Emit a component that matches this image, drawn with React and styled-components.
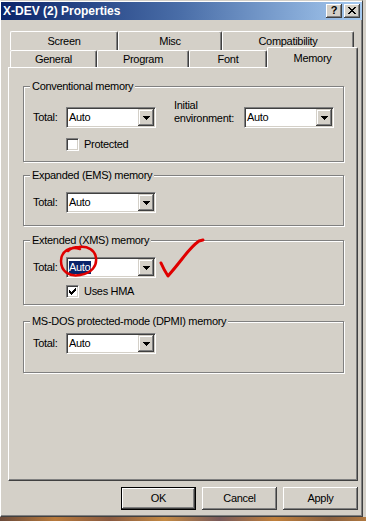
import React from 'react';
import styled, { createGlobalStyle } from 'styled-components';

const FACE = '#d4d0c8';

const Global = createGlobalStyle`
  html, body { margin: 0; padding: 0; }
  body {
    background: ${FACE};
    font-family: "Liberation Sans", Arial, sans-serif;
    font-size: 11px;
    letter-spacing: -0.3px;
    color: #000;
  }
  #root { width: 366px; height: 521px; overflow: hidden; }
`;

const Screen = styled.div`
  position: relative;
  width: 366px;
  height: 521px;
  display: flex;
  flex-direction: column;
  background: ${FACE};
`;

const Window = styled.div`
  box-sizing: border-box;
  width: 363px;
  height: 517px;
  background: ${FACE};
  border-left: 1px solid #fff;
  border-top: 1px solid ${FACE};
  border-right: 1px solid #404040;
  border-bottom: 1px solid #404040;
  box-shadow: inset 0 1px 0 #fff, inset -1px -1px 0 #808080;
  display: flex;
  flex-direction: column;
`;

const Desktop = styled.div`
  height: 4px;
  background: linear-gradient(90deg, #6b4a3a, #b87a3c 15%, #8a5a40 30%, #c48a44 45%, #7a5a5a 60%, #c0803c 75%, #8a6040 90%, #b07840);
`;

const TitleBar = styled.div`
  height: 18px;
  margin-top: 1px;
  padding: 0 2px;
  display: flex;
  align-items: center;
  justify-content: space-between;
  background: linear-gradient(90deg, #0a246a 0%, #4a6ea8 50%, #a6caf0 100%);
`;

const Title = styled.span`
  color: #fff;
  font-weight: bold;
  font-size: 12px;
  letter-spacing: 0;
  white-space: nowrap;
`;

const CaptionButtons = styled.div`
  display: flex;
  gap: 2px;
`;

const CaptionButton = styled.div`
  box-sizing: border-box;
  width: 16px;
  height: 14px;
  background: ${FACE};
  box-shadow: inset -1px -1px 0 #404040, inset 1px 1px 0 #fff, inset -2px -2px 0 #808080;
  display: flex;
  align-items: center;
  justify-content: center;
  font-weight: bold;
  font-size: 11px;
  line-height: 11px;
  letter-spacing: 0;
  padding-bottom: 1px;
`;

const Body = styled.div`
  padding: 11px 0 0 7px;
  display: flex;
  flex-direction: column;
`;

const TabRow = styled.div`
  display: flex;
  align-items: flex-end;
  height: ${(p) => p.$h}px;
  padding-left: 2px;
`;

const Tab = styled.div`
  box-sizing: border-box;
  width: ${(p) => p.$w}px;
  height: ${(p) => (p.$active ? 21 : p.$h)}px;
  margin-bottom: ${(p) => (p.$active ? -1 : 0)}px;
  position: relative;
  z-index: ${(p) => (p.$active ? 2 : 1)};
  background: ${FACE};
  border-left: 1px solid #fff;
  border-top: 1px solid #fff;
  border-right: 1px solid #404040;
  border-radius: 2px 2px 0 0;
  box-shadow: inset -1px 0 0 #808080;
  display: flex;
  align-items: center;
  justify-content: center;
  white-space: nowrap;
`;

const Panel = styled.div`
  box-sizing: border-box;
  width: 350px;
  height: 414px;
  background: ${FACE};
  border-left: 1px solid #fff;
  border-top: 1px solid #fff;
  border-right: 1px solid #404040;
  border-bottom: 1px solid #404040;
  box-shadow: inset -1px -1px 0 #808080;
  padding: 18px 0 0 14px;
  display: flex;
  flex-direction: column;
`;

const Group = styled.div`
  box-sizing: border-box;
  width: 321px;
  height: ${(p) => p.$h}px;
  margin-top: ${(p) => p.$mt}px;
  border: 1px solid #808080;
  box-shadow: inset 1px 1px 0 #fff, 1px 1px 0 #fff;
  padding-left: 9px;
  display: flex;
  flex-direction: column;
`;

const Legend = styled.div`
  align-self: flex-start;
  margin: -7px 0 0 -3px;
  padding: 0 2px;
  background: ${FACE};
  line-height: 13px;
  white-space: nowrap;
`;

const Row = styled.div`
  display: flex;
  align-items: flex-end;
  margin-top: ${(p) => p.$mt}px;
`;

const Label = styled.div`
  width: ${(p) => p.$w}px;
  line-height: 13px;
  margin-bottom: ${(p) => p.$mb}px;
  margin-left: ${(p) => p.$ml || 0}px;
  white-space: nowrap;
`;

const Select = styled.div`
  box-sizing: border-box;
  width: 90px;
  height: 21px;
  background: #fff;
  border-top: 1px solid #808080;
  border-left: 1px solid #808080;
  border-right: 1px solid #fff;
  border-bottom: 1px solid #fff;
  box-shadow: inset 1px 1px 0 #404040, inset -1px -1px 0 ${FACE};
  padding: 1px;
  display: flex;
  align-items: center;
`;

const SelectValue = styled.div`
  flex: 1;
  display: flex;
  padding-left: 1px;
`;

const ValueText = styled.span`
  line-height: 13px;
  padding: 0 1px 0 0;
  background: ${(p) => (p.$selected ? '#0a246a' : 'transparent')};
  color: ${(p) => (p.$selected ? '#fff' : '#000')};
`;

const DropButton = styled.div`
  box-sizing: border-box;
  width: 16px;
  height: 17px;
  background: ${FACE};
  box-shadow: inset -1px -1px 0 #404040, inset 1px 1px 0 ${FACE}, inset -2px -2px 0 #808080, inset 2px 2px 0 #fff;
  display: flex;
  align-items: center;
  justify-content: center;
`;

const CheckRow = styled.div`
  display: flex;
  align-items: center;
  gap: 5px;
  margin-top: ${(p) => p.$mt}px;
  margin-left: 33px;
  line-height: 13px;
`;

const CheckBox = styled.div`
  box-sizing: border-box;
  width: 13px;
  height: 13px;
  background: #fff;
  border-top: 1px solid #808080;
  border-left: 1px solid #808080;
  border-right: 1px solid #fff;
  border-bottom: 1px solid #fff;
  box-shadow: inset 1px 1px 0 #404040, inset -1px -1px 0 ${FACE};
  display: flex;
  align-items: center;
  justify-content: center;
`;

const ButtonRow = styled.div`
  width: 350px;
  display: flex;
  justify-content: flex-end;
  gap: 6px;
  margin-top: 6px;
`;

const Button = styled.div`
  box-sizing: border-box;
  width: 75px;
  height: 23px;
  background: ${FACE};
  border: ${(p) => (p.$default ? '1px solid #000' : 'none')};
  box-shadow: inset -1px -1px 0 #404040, inset 1px 1px 0 #fff, inset -2px -2px 0 #808080;
  display: flex;
  align-items: center;
  justify-content: center;
  line-height: 13px;
`;

const Overlay = styled.svg`
  position: absolute;
  left: 0;
  top: 0;
  pointer-events: none;
`;

const Arrow = () => (
  <svg width="7" height="4" viewBox="0 0 7 4" shapeRendering="crispEdges">
    <rect x="0" y="0" width="7" height="1" fill="#000" />
    <rect x="1" y="1" width="5" height="1" fill="#000" />
    <rect x="2" y="2" width="3" height="1" fill="#000" />
    <rect x="3" y="3" width="1" height="1" fill="#000" />
  </svg>
);

const Combo = ({ value, selected }) => (
  <Select>
    <SelectValue>
      <ValueText $selected={selected}>{value}</ValueText>
    </SelectValue>
    <DropButton>
      <Arrow />
    </DropButton>
  </Select>
);

const Check = ({ checked, label, mt }) => (
  <CheckRow $mt={mt}>
    <CheckBox>
      {checked && (
        <svg width="7" height="7" viewBox="0 0 7 7" shapeRendering="crispEdges">
          <path d="M0 2h1v1h1v1h1v-1h1v-1h1v-1h1v-1h1v3h-1v1h-1v1h-1v1h-1v1h-1v-1h-1v-1h-1v-1h-1z" fill="#000" />
        </svg>
      )}
    </CheckBox>
    <span>{label}</span>
  </CheckRow>
);

const TotalRow = ({ mt, selected }) => (
  <Row $mt={mt}>
    <Label $w={33} $mb={4}>Total:</Label>
    <Combo value="Auto" selected={selected} />
  </Row>
);

export default function App() {
  return (
    <>
      <Global />
      <Screen>
        <Window>
          <TitleBar>
            <Title>X-DEV (2) Properties</Title>
            <CaptionButtons>
              <CaptionButton>?</CaptionButton>
              <CaptionButton>
                <svg width="8" height="7" viewBox="0 0 8 7" shapeRendering="crispEdges">
                  <path d="M0 0h2v1h1v1h2v-1h1v-1h2v1h-1v1h-1v1h-1v1h1v1h1v1h1v1h-2v-1h-1v-1h-2v1h-1v1h-2v-1h1v-1h1v-1h1v-1h-1v-1h-1v-1h-1z" fill="#000" />
                </svg>
              </CaptionButton>
            </CaptionButtons>
          </TitleBar>
          <Body>
            <TabRow $h={19}>
              <Tab $w={108} $h={19}>Screen</Tab>
              <Tab $w={104} $h={19}>Misc</Tab>
              <Tab $w={132} $h={19}>Compatibility</Tab>
            </TabRow>
            <TabRow $h={17}>
              <Tab $w={87} $h={17}>General</Tab>
              <Tab $w={92} $h={17}>Program</Tab>
              <Tab $w={78} $h={17}>Font</Tab>
              <Tab $w={91} $h={17} $active>Memory</Tab>
            </TabRow>
            <Panel>
              <Group $h={76} $mt={0}>
                <Legend>Conventional memory</Legend>
                <Row $mt={6}>
                  <Label $w={33} $mb={4}>Total:</Label>
                  <Combo value="Auto" />
                  <Label $w={70} $mb={3} $ml={18}>
                    Initial
                    <br />
                    environment:
                  </Label>
                  <Combo value="Auto" />
                </Row>
                <Check label="Protected" mt={10} />
              </Group>
              <Group $h={51} $mt={13}>
                <Legend>Expanded (EMS) memory</Legend>
                <TotalRow mt={10} />
              </Group>
              <Group $h={65} $mt={14}>
                <Legend>Extended (XMS) memory</Legend>
                <TotalRow mt={10} selected />
                <Check label="Uses HMA" checked mt={7} />
              </Group>
              <Group $h={52} $mt={16}>
                <Legend>MS-DOS protected-mode (DPMI) memory</Legend>
                <TotalRow mt={5} />
              </Group>
            </Panel>
            <ButtonRow>
              <Button $default>OK</Button>
              <Button>Cancel</Button>
              <Button>Apply</Button>
            </ButtonRow>
          </Body>
        </Window>
        <Desktop />
        <Overlay width="366" height="521" viewBox="0 0 366 521">
          <path
            d="M80 249 C70 246 61 251 61 261 C61 272 70 277 80 275 C92 273 97 266 96 258 C95 250 88 246 79 247 C74 247 70 249 68 251"
            fill="none"
            stroke="#e00000"
            strokeWidth="2.5"
            strokeLinecap="round"
          />
          <path
            d="M161 263 Q164 270 168 276 Q175 268 182 259 Q192 246 199 241 L203 240"
            fill="none"
            stroke="#e00000"
            strokeWidth="3"
            strokeLinecap="round"
            strokeLinejoin="round"
          />
        </Overlay>
      </Screen>
    </>
  );
}
